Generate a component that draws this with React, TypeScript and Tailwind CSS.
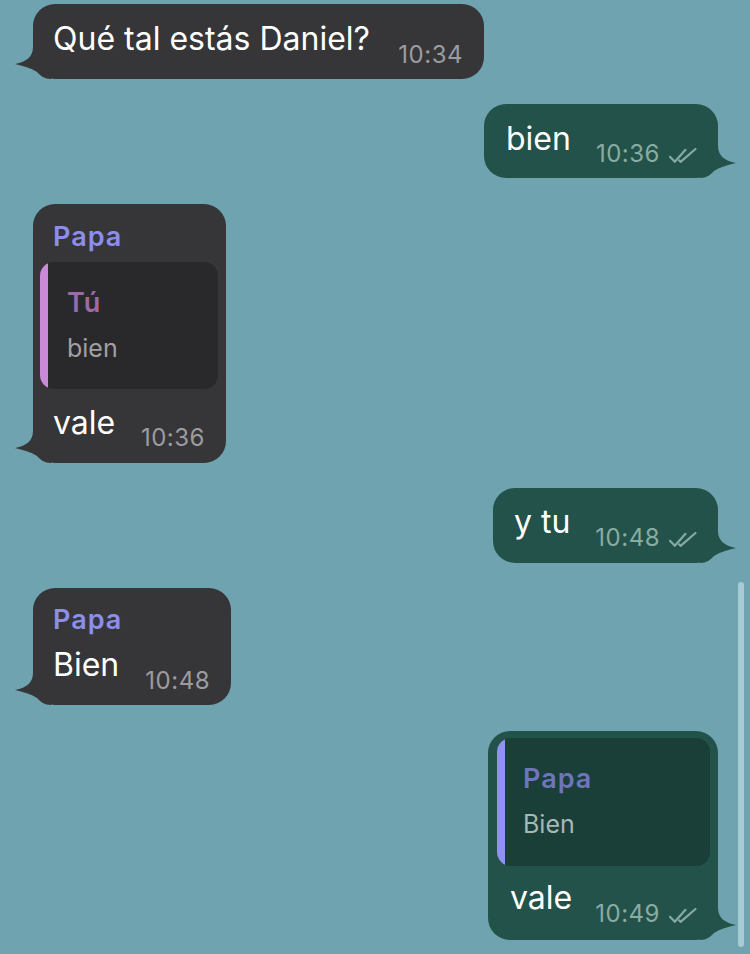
import React from "react";

const font = { fontFamily: "Inter, 'Noto Sans', sans-serif" };

const TAIL =
  "M18 0 C18 9 12 15 0 17 C8 19 16 21 22 25 C26 29 29 32 36 32 L36 0 Z";

function TailLeft({ color }: { color: string }) {
  return (
    <svg className="absolute left-[-18px] bottom-0" width="36" height="32" viewBox="0 0 36 32">
      <path d={TAIL} fill={color} />
    </svg>
  );
}

function TailRight({ color }: { color: string }) {
  return (
    <svg
      className="absolute right-[-18px] bottom-0 -scale-x-100"
      width="36"
      height="32"
      viewBox="0 0 36 32"
    >
      <path d={TAIL} fill={color} />
    </svg>
  );
}

function Checks() {
  return (
    <svg width="30" height="17" viewBox="0 0 30 17" className="ml-2 mb-[4px]">
      <path
        d="M2 9.8 L6.8 14.8 L17.5 2.8"
        stroke="#84aba2"
        strokeWidth="2.2"
        fill="none"
        strokeLinecap="round"
        strokeLinejoin="round"
      />
      <path
        d="M11.2 13.4 L12.6 14.8 L27.5 2"
        stroke="#84aba2"
        strokeWidth="2.2"
        fill="none"
        strokeLinecap="round"
        strokeLinejoin="round"
      />
    </svg>
  );
}

const IN_BG = "#363638";
const OUT_BG = "#22524a";

const MSG = "text-[32px] leading-[38px] text-white";
const TIME_IN = "text-[24px] leading-[29px] tracking-[0.5px] text-[#9c9ca0]";
const TIME_OUT = "text-[24px] leading-[29px] tracking-[0.5px] text-[#89aca3]";
const NAME = "text-[27px] leading-[33px] font-semibold tracking-[1px]";
const QUOTE = "text-[25px] leading-[30px]";

export default function App() {
  return (
    <div
      className="relative w-[750px] h-[954px] overflow-hidden bg-[#6fa3b0] flex flex-col gap-[25px] pt-[4px] pl-[33px] pr-[32px]"
      style={font}
    >
      {/* Bubble 1 */}
      <div className="relative w-[451px] h-[75px] rounded-[22px] bg-[#363638] pl-5 pr-[21px] pt-4 flex items-start">
        <span className={MSG}>Qué tal estás Daniel?</span>
        <span className={`ml-auto mt-[20px] ${TIME_IN}`}>10:34</span>
        <TailLeft color={IN_BG} />
      </div>

      {/* Bubble 2 */}
      <div className="relative self-end w-[234px] h-[74px] rounded-[22px] bg-[#22524a] pl-[22px] pr-5 pt-4 flex items-start">
        <span className={MSG}>bien</span>
        <div className="ml-auto mt-[19px] flex items-end">
          <span className={TIME_OUT}>10:36</span>
          <Checks />
        </div>
        <TailRight color={OUT_BG} />
      </div>

      {/* Bubble 3 */}
      <div className="relative mt-px w-[193px] h-[259px] rounded-[22px] bg-[#363638] pt-4 flex flex-col">
        <div className={`px-5 ${NAME} text-[#8d8ee9]`}>Papa</div>
        <div className="mt-[9px] ml-[7px] mr-2 h-[127px] rounded-[14px] bg-[#29292b] overflow-hidden flex">
          <div className="w-[8px] bg-[#c98ad7]" />
          <div className="pl-[19px] pt-[24px] flex flex-col">
            <span className={`${NAME} text-[#9c6aa8]`}>Tú</span>
            <span className={`mt-[14px] ${QUOTE} text-[#a0a0a3]`}>bien</span>
          </div>
        </div>
        <div className="mt-[15px] pl-5 pr-[21px] flex items-start">
          <span className={MSG}>vale</span>
          <span className={`ml-auto mt-[19px] ${TIME_IN}`}>10:36</span>
        </div>
        <TailLeft color={IN_BG} />
      </div>

      {/* Bubble 4 */}
      <div className="relative self-end w-[225px] h-[75px] rounded-[22px] bg-[#22524a] pl-[21px] pr-5 pt-[15px] flex items-start">
        <span className={MSG}>y tu</span>
        <div className="ml-auto mt-[20px] flex items-end">
          <span className={TIME_OUT}>10:48</span>
          <Checks />
        </div>
        <TailRight color={OUT_BG} />
      </div>

      {/* Bubble 5 */}
      <div className="relative w-[198px] h-[117px] rounded-[22px] bg-[#363638] pt-[15px] flex flex-col">
        <div className={`px-5 ${NAME} text-[#8d8ee9]`}>Papa</div>
        <div className="mt-[10px] pl-5 pr-[21px] flex items-start">
          <span className={MSG}>Bien</span>
          <span className={`ml-auto mt-[20px] ${TIME_IN}`}>10:48</span>
        </div>
        <TailLeft color={IN_BG} />
      </div>

      {/* Bubble 6 */}
      <div className="relative self-end mt-px w-[230px] h-[209px] rounded-[22px] bg-[#22524a] pt-[7px] flex flex-col">
        <div className="ml-[9px] mr-2 h-[128px] rounded-[14px] bg-[#193f38] overflow-hidden flex">
          <div className="w-[8px] bg-[#9191f2]" />
          <div className="pl-[18px] pt-[24px] flex flex-col">
            <span className={`${NAME} text-[#6f75ba]`}>Papa</span>
            <span className={`mt-[14px] ${QUOTE} text-[#a6b9b4]`}>Bien</span>
          </div>
        </div>
        <div className="mt-[13px] pl-[22px] pr-5 flex items-start">
          <span className={MSG}>vale</span>
          <div className="ml-auto mt-[20px] flex items-end">
            <span className={TIME_OUT}>10:49</span>
            <Checks />
          </div>
        </div>
        <TailRight color={OUT_BG} />
      </div>

      {/* Scrollbar overlay */}
      <div className="absolute left-[738px] top-[582px] w-[6px] h-[365px] rounded-full bg-[#a9cad4]" />
    </div>
  );
}
